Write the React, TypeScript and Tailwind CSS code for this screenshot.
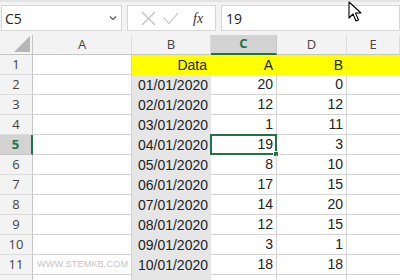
import React from "react";

const rows: [string, number, number][] = [
  ["01/01/2020", 20, 0],
  ["02/01/2020", 12, 12],
  ["03/01/2020", 1, 11],
  ["04/01/2020", 19, 3],
  ["05/01/2020", 8, 10],
  ["06/01/2020", 17, 15],
  ["07/01/2020", 14, 20],
  ["08/01/2020", 12, 15],
  ["09/01/2020", 3, 1],
  ["10/01/2020", 18, 18],
];

const font = { fontFamily: '"Liberation Sans", Arial, sans-serif' };
const uiFont = { fontFamily: '"Open Sans", "Noto Sans", sans-serif' };

function Cursor() {
  return (
    <svg className="absolute left-[348px] top-[1px]" width="16" height="22" viewBox="0 0 16 22">
      <path d="M1 1 L1 17 L5 13 L8 20 L10.5 19 L7.5 12 L13 12 Z" fill="white" stroke="black" strokeWidth="1.1" strokeLinejoin="round" />
    </svg>
  );
}

export default function App() {
  return (
    <div className="relative w-[400px] h-[280px] overflow-hidden bg-white text-[#222]" style={font}>
      {/* formula bar area */}
      <div className="h-[35px] bg-[#f3f3f3] border-t-2 border-[#e3e3e3] flex items-start pt-[3px] pl-[1px] gap-[5px]">
        <div className="w-[121px] h-[26px] bg-white border border-[#d6d6d6] flex items-center justify-between pl-[3px] pr-[4px]">
          <span className="text-[14px] text-[#222]" style={uiFont}>C5</span>
          <svg width="8" height="6" viewBox="0 0 8 6"><path d="M1 1.5 L4 4.5 L7 1.5" fill="none" stroke="#555" strokeWidth="1.1" /></svg>
        </div>
        <div className="w-[89px] h-[26px] bg-white border border-[#d6d6d6] flex items-center pl-[13px] gap-[7px]">
          <svg width="15" height="15" viewBox="0 0 15 15"><path d="M1 1 L14 14 M14 1 L1 14" stroke="#bdbdbd" strokeWidth="1.1" /></svg>
          <svg width="16" height="13" viewBox="0 0 16 13"><path d="M1 6 L6 11.5 L15 1" fill="none" stroke="#bdbdbd" strokeWidth="1.1" /></svg>
          <span className="ml-[7px] text-[14px] italic text-[#333]" style={{ fontFamily: '"Liberation Serif", serif' }}>fx</span>
        </div>
        <div className="flex-1 h-[26px] bg-white border border-[#d6d6d6] flex items-center pl-[4px]">
          <span className="text-[14px] text-[#222]" style={uiFont}>19</span>
        </div>
      </div>

      {/* grid */}
      <div className="grid grid-cols-[33px_99px_79px_66px_70px_1fr]">
        {/* header row */}
        <div className="h-[20px] bg-[#f3f3f3] border-r border-b border-[#c6c6c6] relative">
          <svg className="absolute right-[2px] bottom-[2px]" width="16" height="16" viewBox="0 0 16 16"><path d="M16 0 L16 16 L0 16 Z" fill="#b6b6b6" /></svg>
        </div>
        {["A", "B", "C", "D", "E"].map((c) =>
          c === "C" ? (
            <div key={c} className="h-[20px] bg-[#d3d3d3] border-b-2 border-[#217346] border-r border-r-[#c6c6c6] flex items-center justify-center text-[13px] font-bold text-[#217346]" style={uiFont}>
              {c}
            </div>
          ) : (
            <div key={c} className="h-[20px] bg-[#f3f3f3] border-r border-b border-[#dcdcdc] border-b-[#c6c6c6] flex items-center justify-center text-[13px] text-[#444]" style={uiFont}>
              {c}
            </div>
          )
        )}

        {/* row 1 */}
        <div className="h-[20px] bg-[#f3f3f3] border-r border-b border-[#dcdcdc] border-r-[#c6c6c6] flex items-center justify-center text-[13px] text-[#444]" style={uiFont}>1</div>
        <div className="h-[20px] border-r border-b border-[#d4d4d4]" />
        <div className="h-[20px] bg-[#ffff00] flex items-center justify-end pr-[4px] text-[14px]">Data</div>
        <div className="h-[20px] bg-[#ffff00] flex items-center justify-end pr-[4px] text-[14px]">A</div>
        <div className="h-[20px] bg-[#ffff00] flex items-center justify-end pr-[4px] text-[14px]">B</div>
        <div className="h-[20px] bg-[#ffff00]" />

        {rows.map(([d, a, b], i) => {
          const r = i + 2;
          const sel = r === 5;
          return (
            <React.Fragment key={r}>
              {sel ? (
                <div className="h-[20px] bg-[#d3d3d3] border-r-2 border-[#217346] border-b border-b-[#c6c6c6] flex items-center justify-center text-[13px] font-bold text-[#217346]" style={uiFont}>{r}</div>
              ) : (
                <div className="h-[20px] bg-[#f3f3f3] border-r border-b border-[#dcdcdc] border-r-[#c6c6c6] flex items-center justify-center text-[13px] text-[#444]" style={uiFont}>{r}</div>
              )}
              <div className="h-[20px] border-r border-b border-[#d4d4d4] flex items-center pl-[4px]">
                {r === 11 && <span className="text-[9.2px] text-[#c4c4c4] tracking-[0.1px]" style={font}>WWW.STEMKB.COM</span>}
              </div>
              <div className="h-[20px] bg-[#e6e6e6] flex items-center justify-end pr-[3px] text-[14px]">{d}</div>
              <div className="h-[20px] border-r border-b border-[#d4d4d4] flex items-center justify-end pr-[3px] text-[14px] relative">
                {a}
                {sel && (
                  <>
                    <div className="absolute left-[-1px] top-[-1px] right-[-1px] bottom-[-1px] border-2 border-[#217346]" />
                    <div className="absolute right-[-3px] bottom-[-3px] w-[6px] h-[6px] bg-[#217346] border border-white" />
                  </>
                )}
              </div>
              <div className="h-[20px] border-r border-b border-[#d4d4d4] flex items-center justify-end pr-[3px] text-[14px]">{b}</div>
              <div className="h-[20px] border-b border-[#d4d4d4]" />
            </React.Fragment>
          );
        })}
        <div className="h-[20px] bg-[#f3f3f3] border-r border-[#c6c6c6]" />
        <div className="h-[20px] border-r border-[#d4d4d4]" />
        <div className="h-[20px] bg-[#e6e6e6]" />
        <div className="h-[20px] border-r border-[#d4d4d4]" />
        <div className="h-[20px] border-r border-[#d4d4d4]" />
        <div className="h-[20px]" />
      </div>
      <Cursor />
    </div>
  );
}
